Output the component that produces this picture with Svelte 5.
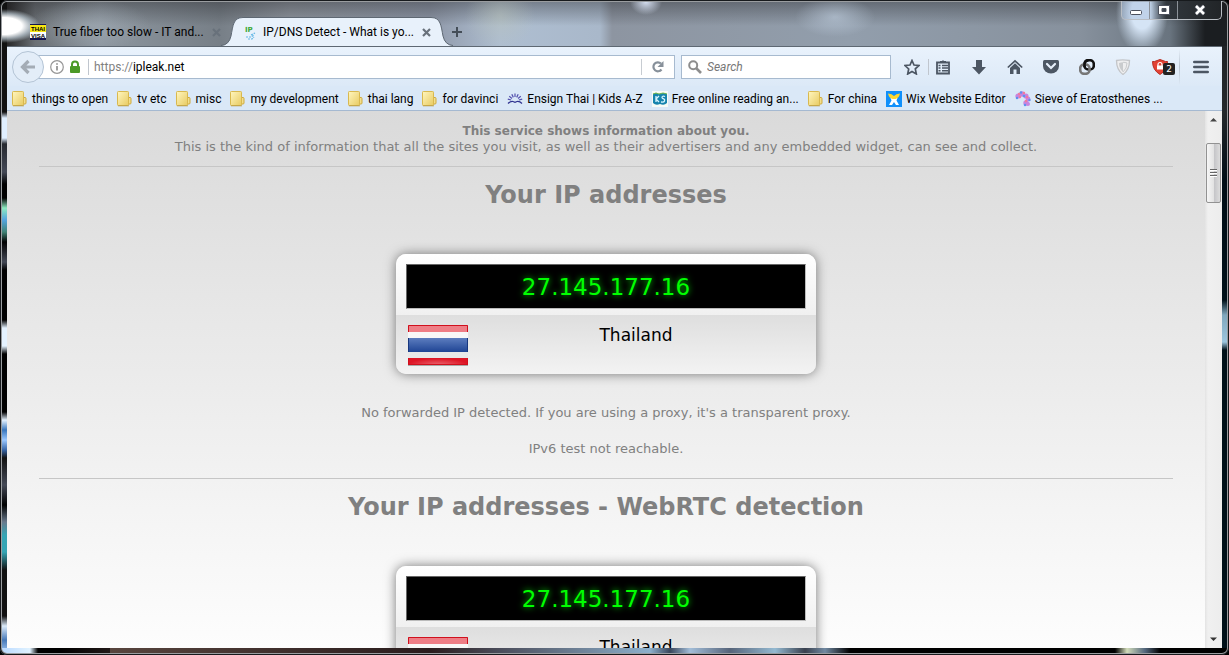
<script>
  const bookmarks = [
    { icon: 'folder', label: 'things to open' },
    { icon: 'folder', label: 'tv etc' },
    { icon: 'folder', label: 'misc' },
    { icon: 'folder', label: 'my development' },
    { icon: 'folder', label: 'thai lang' },
    { icon: 'folder', label: 'for davinci' },
    { icon: 'rays', label: 'Ensign Thai | Kids A-Z' },
    { icon: 'kids', label: 'Free online reading an...' },
    { icon: 'folder', label: 'For china' },
    { icon: 'wix', label: 'Wix Website Editor' },
    { icon: 'sieve', label: 'Sieve of Eratosthenes ...' }
  ];
  const sections = [
    { title: 'Your IP addresses', ip: '27.145.177.16', country: 'Thailand', notes: ["No forwarded IP detected. If you are using a proxy, it's a transparent proxy.", 'IPv6 test not reachable.'] },
    { title: 'Your IP addresses - WebRTC detection', ip: '27.145.177.16', country: 'Thailand', notes: [] }
  ];
  const rays = [-75, -50, -25, 0, 25, 50, 75];
</script>

{#snippet closeMark()}
  <svg width="9" height="9" viewBox="0 0 9 9"><path d="M1 1l7 7M8 1L1 8" stroke="#68717b" stroke-width="2.2" /></svg>
{/snippet}

{#snippet siteIcon(kind)}
  <svg width="16" height="16" viewBox="0 0 16 16">
    {#if kind === 'folder'}
      <defs>
        <linearGradient id="fold" x1="0" y1="0" x2="1" y2="1"><stop offset="0" stop-color="#fff6bf" /><stop offset="1" stop-color="#e8cb62" /></linearGradient>
      </defs>
      <path d="M10 6.500h3q1 0 1 1v4.500q0 1-1 1h-3z" fill="#f2df8d" stroke="#cfa93c" />
      <rect x=".5" y=".5" width="11" height="14" rx=".8" fill="url(#fold)" stroke="#d9b94f" />
      <path d="M1 14.800h11" stroke="#b89a45" stroke-width=".8" />
    {:else if kind === 'rays'}
      {#each rays as angle}
        <path d="M8 6V2.500" stroke="#5350ae" stroke-width="1.200" transform="rotate({angle} 8 10)" />
      {/each}
      <path d="M1 12.500q2.500-2.500 5-2l2 .8 2-.8q2.500-.5 5 2" stroke="#2e318f" fill="none" stroke-width="1.200" />
    {:else if kind === 'kids'}
      <rect width="16" height="16" fill="#f8fbf5" />
      <path d="M1 3q3-2 6 0 4-2 8 0v9q-3 3-7 1-4 2-7-1z" fill="#1784ad" />
      <path d="M1 3q3-2 6 0 4-2 8 0" stroke="#74b94e" fill="none" />
      <path d="M4 5v6M7 5L4 8l3 3M13 5.500q-3-1-3 1 0 1 2 1.500 1 .5.500 2T9 11" stroke="#d8f6ff" stroke-width="1.300" fill="none" />
    {:else if kind === 'wix'}
      <rect width="16" height="16" fill="#1090fb" />
      <path d="M4.500 7h7l-1 2.500 2.500 4.500h-3l-2-3-2 3H3l2.500-4.500z" fill="#fff" />
      <path d="M2 2.500q4 0 6 2.500 2-2.500 6-2.500-1 4.500-4.500 5.500h-3Q3 7 2 2.500z" fill="#ffd82f" />
    {:else}
      <g fill="#c784df">
        <circle cx="3" cy="5" r="2.600" /><circle cx="7" cy="3" r="2.700" /><circle cx="11" cy="5" r="2.600" /><circle cx="13" cy="8" r="2.400" /><circle cx="11" cy="12" r="2.700" /><circle cx="13" cy="13" r="2" />
      </g>
      <g fill="#5d91ef">
        <circle cx="2" cy="7" r="1.200" /><circle cx="6" cy="1.500" r="1.200" /><circle cx="9" cy="5" r="1.300" /><circle cx="14.500" cy="9" r="1.200" /><circle cx="10" cy="14" r="1.200" />
      </g>
      <g fill="#f27a9a">
        <circle cx="4" cy="3" r="1.200" /><circle cx="9" cy="2" r="1.200" /><circle cx="12" cy="6" r="1.200" /><circle cx="11" cy="10" r="1.200" /><circle cx="5" cy="6" r="1.200" />
      </g>
    {/if}
  </svg>
{/snippet}

{#snippet flag()}
  <svg class="flag" width="60" height="41" viewBox="0 0 60 41" role="img" aria-label="Flag of Thailand">
    <defs>
      <linearGradient id="blue" x2="0" y2="1"><stop stop-color="#5c7dbf" /><stop offset="1" stop-color="#1f4494" /></linearGradient>
      <radialGradient id="shine" cx=".5" cy="1" r=".5"><stop stop-color="#fff" stop-opacity=".35" /><stop offset="1" stop-color="#fff" stop-opacity="0" /></radialGradient>
    </defs>
    <rect width="60" height="40" fill="#f8f8f8" />
    <rect width="60" height="7" fill="#ee7e86" />
    <rect y="13" width="60" height="14" fill="url(#blue)" />
    <rect y="27" width="60" height="6" fill="#e8e8e8" />
    <rect y="33" width="60" height="7" fill="#de1525" />
    <rect y="27" width="60" height="13" fill="url(#shine)" />
    <path d="M.5 7V.5h59V7M.5 33v6.500h59V33" fill="none" stroke="#d0101d" />
    <path d="M.5 13v14M59.500 13v14" stroke="#17377f" />
    <path d="M0 40.500h60" stroke="#aaa" />
  </svg>
{/snippet}

<div class="window">
  <header class="titlebar">
    <button class="tab">
      <svg width="16" height="16" viewBox="0 0 16 16">
        <rect width="16" height="16" fill="#15154f" />
        <rect y="1" width="16" height="7" fill="#f8e713" />
        <rect y="8" width="16" height="6" fill="#fff" />
        <text x="8" y="7" class="fav">THAI</text>
        <text x="8" y="13.500" class="fav">VISA</text>
      </svg>
      <span>True fiber too slow - IT and...</span>
      {@render closeMark()}
    </button>
    <div class="active">
      <svg width="22" height="29" viewBox="0 0 22 29">
        <path d="M0 29Q8 28 10 19C12 9 12 .5 22 .5V29z" fill="#e8f1fb" />
        <path d="M0 28.500Q8 28 10 19C12 9 12 .5 22 .5" fill="none" stroke="#5e6873" />
      </svg>
      <button class="tab front">
        <svg width="16" height="16" viewBox="0 0 16 16">
          <text x="2" y="8" class="ip">IP</text>
          <path d="M8 11l4-2M3 13h5l3-2M5 15h4l2-2" stroke="#62b7e6" stroke-width="1.200" stroke-dasharray="2 1" fill="none" />
        </svg>
        <span>IP/DNS Detect - What is yo...</span>
        {@render closeMark()}
      </button>
      <svg width="22" height="29" viewBox="0 0 22 29">
        <path d="M22 29Q14 28 12 19C10 9 10 .5 0 .5V29z" fill="#e8f1fb" />
        <path d="M22 28.500Q14 28 12 19C10 9 10 .5 0 .5" fill="none" stroke="#5e6873" />
      </svg>
    </div>
    <button class="plus" aria-label="Open a new tab">
      <svg width="12" height="12" viewBox="0 0 12 12"><path d="M6 1v10M1 6h10" stroke="#444d57" stroke-width="2" /></svg>
    </button>
    <div class="caption">
      <button aria-label="Minimize"><svg width="14" height="12" viewBox="0 0 14 12"><rect x="1.500" y="6.500" width="11" height="4" rx="1" fill="#fff" stroke="#4b505c" /></svg></button>
      <button aria-label="Maximize"><svg width="14" height="12" viewBox="0 0 14 12"><path fill-rule="evenodd" d="M1.500 1.500h11v9h-11zM5 4.500v3h4v-3z" fill="#fff" stroke="#4b505c" /></svg></button>
      <button class="wide" aria-label="Close"><svg width="14" height="12" viewBox="0 0 14 12"><path d="M3 2l8 8M11 2l-8 8" stroke="#4b505c" stroke-width="4" /><path d="M3 2l8 8M11 2l-8 8" stroke="#fff" stroke-width="2.600" /></svg></button>
    </div>
  </header>

  <div class="client">
    <nav class="toolbar">
      <button class="back" aria-label="Back">
        <svg width="16" height="16" viewBox="0 0 16 16"><path d="M8.500 2L2.500 8l6 6M3 8h12" fill="none" stroke="#a4acb5" stroke-width="3.200" /></svg>
      </button>
      <div class="url">
        <svg width="14" height="14" viewBox="0 0 14 14"><circle cx="7" cy="7" r="6.300" fill="none" stroke="#969696" stroke-width="1.200" /><path d="M7 6v4.500M7 3.200v1.600" stroke="#888" stroke-width="1.600" /></svg>
        <svg width="12" height="14" viewBox="0 0 12 14"><path d="M3 7V4.500a3 3 0 0 1 6 0V7" fill="none" stroke="#4c9a27" stroke-width="2" /><rect x="1" y="6" width="10" height="7" rx="1" fill="#4c9a27" /></svg>
        <span class="rule"></span>
        <label for="address">https://</label>
        <input id="address" value="ipleak.net" />
        <button class="reload" aria-label="Reload">
          <svg width="14" height="14" viewBox="0 0 14 14"><path d="M10.500 9.500A4.500 4.500 0 1 1 10 3.500" fill="none" stroke="#87909a" stroke-width="2.200" /><path d="M12.500 1v6h-6z" fill="#87909a" /></svg>
        </button>
      </div>
      <div class="search">
        <svg width="14" height="14" viewBox="0 0 14 14"><circle cx="5.200" cy="5.200" r="4" fill="none" stroke="#8d8d8d" stroke-width="2" /><path d="M8 8l5 5" stroke="#8d8d8d" stroke-width="2.600" /></svg>
        <input aria-label="Search" placeholder="Search" />
      </div>
      <div class="marks">
        <button aria-label="Bookmark this page"><svg width="16" height="16" viewBox="0 0 16 16"><path d="M8 1.500l2 4.500 5 .5-3.700 3.400 1 5L8 12.400 3.700 15l1-5L1 6.500 6 6z" fill="none" stroke="#4c5663" stroke-width="1.700" /></svg></button>
        <span class="rule"></span>
        <button aria-label="Show bookmarks"><svg width="16" height="16" viewBox="0 0 16 16"><path d="M2 3.500h12v11H2z" fill="none" stroke="#4c5663" stroke-width="1.800" /><path d="M5 4V2h2a1.200 1.200 0 0 1 2 0h2v2z" fill="#4c5663" /><path d="M3.500 6.500h2m1.500 0h6M3.500 9h2M7 9h6M3.500 11.800h2m1.500 0h6" stroke="#4c5663" stroke-width="1.400" /></svg></button>
      </div>
      <div class="tools">
        <button aria-label="Downloads"><svg width="16" height="16" viewBox="0 0 16 16"><path d="M5 1h6v7h4l-7 7.500L1 8h4z" fill="#4c5663" /></svg></button>
        <button aria-label="Home"><svg width="16" height="16" viewBox="0 0 16 16"><path d="M.8 8.500L8 1.800l7.200 6.700" fill="none" stroke="#4c5663" stroke-width="1.700" /><path d="M3 9l5-4.700L13 9v6H9.500v-4.500h-3V15H3z" fill="#4c5663" /></svg></button>
        <button aria-label="Pocket"><svg width="16" height="16" viewBox="0 0 16 16"><path d="M1.500 1h13q1.500 0 1.500 1.500V7a8 7.500 0 0 1-16 0V2.500Q0 1 1.500 1z" fill="#4c5663" /><path d="M4 5l4 4 4-4" fill="none" stroke="#e6effa" stroke-width="2.200" stroke-linecap="round" /></svg></button>
        <button aria-label="Linked sessions"><svg width="16" height="16" viewBox="0 0 16 16"><rect x="5.500" y="1.200" width="9.300" height="9.300" rx="3.800" fill="none" stroke="#111" stroke-width="2.600" /><rect x="1.200" y="5.500" width="9.300" height="9.300" rx="3.800" fill="none" stroke="#777" stroke-width="2.600" /><path d="M5.500 8V5q.3-3.500 4-3.800" fill="none" stroke="#111" stroke-width="2.600" /></svg></button>
        <button aria-label="Shield"><svg width="16" height="16" viewBox="0 0 16 16"><path d="M1.500 1.500q6-1.200 13 0Q14.500 11 8 15.500 1.500 11 1.500 1.500z" fill="#eeeeef" stroke="#c3c5c8" stroke-width="1.300" /><path d="M4 4q2-.7 4-.7V13Q4 9.500 4 4z" fill="#c9cbcd" /><path d="M8 3.300q2 0 4 .7Q12 9.500 8 13" fill="none" stroke="#c9cbcd" /></svg></button>
      </div>
      <button class="guard" aria-label="Blocked trackers, 2">
        <svg width="16" height="16" viewBox="0 0 16 16"><path d="M8 .5l5.500 2h2Q15.500 11 8 15.500.5 11 .5 2.500h2z" fill="#e34234" stroke="#b72f25" /><path d="M6 7V5.500a2 2 0 0 1 4 0V7" fill="none" stroke="#fff" stroke-width="1.200" /><rect x="5" y="6.500" width="6" height="4" fill="#fff" /></svg>
        <span class="badge">2</span>
      </button>
      <span class="tall"></span>
      <button class="menu" aria-label="Open menu"><svg width="16" height="14" viewBox="0 0 16 14"><path d="M1.300 2h13.400M1.300 7h13.400M1.300 12h13.400" stroke="#4c5663" stroke-width="2.600" stroke-linecap="round" /></svg></button>
    </nav>

    <nav class="bookmarks" aria-label="Bookmarks">
      {#each bookmarks as item}
        <a href="#top">{@render siteIcon(item.icon)}<span>{item.label}</span></a>
      {/each}
    </nav>

    <div class="viewport">
      <main id="top">
        <p class="intro"><strong>This service shows information about you.</strong><br />This is the kind of information that all the sites you visit, as well as their advertisers and any embedded widget, can see and collect.</p>
        {#each sections as section}
          <section>
            <h1>{section.title}</h1>
            <div class="card">
              <div class="top"><div class="address">{section.ip}</div></div>
              <div class="place">{@render flag()}<span>{section.country}</span></div>
            </div>
            {#each section.notes as note}<p>{note}</p>{/each}
          </section>
        {/each}
      </main>
      <div class="scrollbar" aria-hidden="true">
        <svg width="9" height="5" viewBox="0 0 9 5"><path d="M1 4.500h7L4.500 1z" fill="#444" /></svg>
        <span class="thumb"><i></i><i></i><i></i></span>
        <svg class="down" width="9" height="5" viewBox="0 0 9 5"><path d="M1 .5h7L4.500 4z" fill="#333" /></svg>
      </div>
    </div>
  </div>
</div>

<style>
  :global(body) { margin: 0; background: #000; }
  * { box-sizing: border-box; }
  button, input { font: inherit; color: inherit; border: 0; padding: 0; background: none; outline: 0; }
  button { display: flex; align-items: center; justify-content: center; }
  svg { display: block; flex: none; }

  .window {
    height: 100vh;
    display: flex;
    flex-direction: column;
    padding: 1px 7px 7px;
    border-radius: 7px;
    box-shadow: inset 0 0 0 1px #171a1d, inset 0 0 0 2px #9a9da0;
    font: 12px/16px Roboto, "Open Sans", sans-serif;
    color: #000;
    background:
      radial-gradient(ellipse 36px 17px at 4px 26px, #fff 50%, #d4e4ef99 75%, transparent) no-repeat,
      linear-gradient(90deg, #b7d8ff, #e0f2ff 30px, #000 38px 60px, #211918 110px, #58453e 80px, #2a1c1d 430px, #4b4d5b 500px, #8db0cc 650px, #39465b 670px, #a2bdd8 690px, #56647a 730px, #94b9d1 775px, #39404e 805px, #7189a1 825px, #000 850px, #000 1115px, #d2dcba 1127px, #53677d 1145px, #000 1160px) 0 100% / 100% 7px no-repeat,
      linear-gradient(#111 0 112px, #e0efff 118px 138px, #26292f 144px, #444956 172px, #000 184px 198px, #8debc0 208px, #54a4df 220px, #408375 232px, #000 242px, #444956 262px, #000 270px 320px, #e4f2ff 328px 346px, #000 354px 412px, #e4f2ff 420px, #3876bd 430px, #9bc8ff 440px, #3765a6 450px, #111 458px, #444956 485px, #000 505px, #68798c 522px, #35a5b4 535px 552px, #111 570px 616px, #dcebfa 626px, #4779b8 640px, #b7d8ff) 0 0 / 7px 100% no-repeat,
      linear-gradient(#202326, #24282b 64px, #000d16 134px, #001019 254px, #80a7bd 269px, #9dc6df 296px, #001019 304px, #001019) 100% 46px / 7px 100% no-repeat,
      radial-gradient(ellipse 60px 26px at 90px 25px, #aab5be77, transparent) no-repeat,
      radial-gradient(ellipse 35px 34px at 500px 16px, #bac2b577, transparent) no-repeat,
      radial-gradient(ellipse 16px 13px at 646px 2px, #d4def0, transparent) no-repeat,
      radial-gradient(ellipse 40px 20px at 835px 17px, #c2d1e299, transparent) no-repeat,
      radial-gradient(ellipse 26px 42px at 1142px 12px, #d5e4f5 40%, #b5c4d499 75%, transparent) no-repeat,
      linear-gradient(#1b1b1e66, transparent 26px) 0 0 / 100% 46px no-repeat,
      linear-gradient(90deg, #171515, #6b7075 35px, #8d969f 100px, #777f87 220px, #9299a2 290px, #8f98a8 430px, #aebed1 500px, #a9b8ca 600px, #8d95a1 612px, #929eac 850px, #87919d 1080px, #69747f 1170px, #1b1e21 1205px);
  }
  .titlebar { display: flex; align-items: flex-end; height: 45px; flex: none; }
  .tab { gap: 8px; height: 28px; padding-left: 23px; white-space: nowrap; }
  .tab span { min-width: 151px; text-align: left; }
  .tab svg:first-child { margin-right: -1px; }
  .fav { font: bold 6px "Liberation Sans", sans-serif; text-anchor: middle; }
  .ip { font: bold 7px "DejaVu Sans", sans-serif; fill: #3da938; }
  .active { display: flex; }
  .front { padding: 0; height: 29px; background: #e8f1fb; border-top: 1px solid #5e6873; }
  .front svg:first-child { margin-right: -4px; }
  .plus { width: 24px; height: 28px; margin-left: -8px; }
  .caption { display: flex; align-self: flex-start; margin-left: auto; border: 1px solid #b9bec4; border-top: 0; border-radius: 0 0 5px 5px; height: 19px; background: linear-gradient(90deg, #a3bad766 28%, #31373d 45%, #222528); }
  .caption button { width: 28px; border-right: 1px solid #8c9299; }
  .caption .wide { width: 43px; border: 0; }

  .client { flex: 1; min-height: 0; display: flex; flex-direction: column; background: #fff; }
  .toolbar { display: flex; align-items: center; flex: none; height: 40px; padding: 0 13px 0 5px; border-top: 1px solid #5e6873; background: linear-gradient(#e9f2fc, #dce9f7); }
  .back { width: 32px; height: 32px; border-radius: 50%; border: 1px solid #b4c4d5; background: #e3edf8; z-index: 1; flex: none; }
  .url { flex: 1; min-width: 0; display: flex; align-items: center; height: 24px; margin-left: -10px; padding-left: 15px; background: #fff; border: 1px solid #a7bacf; }
  .url svg + svg { margin-left: 5px; }
  .url label { color: #7f7f7f; }
  .url input { flex: 1; min-width: 0; height: 20px; }
  .rule { width: 1px; height: 16px; background: #c0c6ce; margin: 0 5px 0 7px; flex: none; }
  .marks .rule { margin: 0 6px 0 8px; }
  .reload { width: 33px; height: 16px; border-left: 1px solid #c7ccd2; }
  .search { width: 210px; height: 24px; display: flex; align-items: center; gap: 5px; margin-left: 6px; padding-left: 6px; background: #fff; border: 1px solid #a7bacf; }
  .search input { flex: 1; min-width: 0; }
  .search input::placeholder { color: #777; font-style: italic; opacity: 1; }
  .marks { display: flex; align-items: center; margin-left: 13px; }
  .tools { display: flex; gap: 20px; margin: 0 21px 0 20px; }
  .guard { position: relative; width: 24px; justify-content: flex-start; }
  .badge { position: absolute; left: 11px; top: 4px; width: 12px; height: 12px; border-radius: 2px; background: #222; color: #fff; font: 9px/12px "DejaVu Sans", sans-serif; }
  .tall { width: 1px; height: 36px; margin: 0 13px 0 3px; background: linear-gradient(transparent, #b8c2cd, transparent); }

  .bookmarks { flex: none; display: flex; align-items: center; gap: 9px; height: 25px; padding: 1px 5px 0; background: #dae8f7; border-bottom: 1px solid #a5b9d1; white-space: nowrap; overflow: hidden; }
  .bookmarks a { display: flex; align-items: center; gap: 4px; color: #000; text-decoration: none; }

  .viewport { flex: 1; min-height: 0; display: flex; }
  main { flex: 1; min-width: 0; overflow: hidden; padding: 12px 32px 0; background: linear-gradient(#dadada, #fdfdfd); color: #808080; font: 13px/16px "DejaVu Sans", sans-serif; text-align: center; }
  p { margin: 0; }
  .intro { margin-bottom: 11px; }
  strong { font-size: 12px; }
  section { border-top: 1px solid #c6c6c6; padding: 12px 0 21px; }
  h1 { margin: 0 0 43px; font-size: 24px; line-height: 32px; }
  .card { width: 420px; height: 120px; margin: 0 auto 31px; border-radius: 10px; overflow: hidden; box-shadow: 0 0 12px #777; background: #eee; color: #000; }
  .top { height: 61px; padding: 10px; background: linear-gradient(#fff, #f0f0f0); }
  .address { height: 45px; border: 1px solid #666; border-bottom-color: #bbb; border-right-color: #bbb; background: #000; color: #0f0; font-size: 23px; line-height: 45px; text-shadow: 0 0 6px #0c0; }
  .place { display: flex; height: 59px; padding: 10px 12px; background: linear-gradient(#dedede, #f3f3f3); }
  .place span { flex: 1; font-size: 17px; line-height: 20px; }
  section p + p { margin-top: 20px; }

  .scrollbar { width: 17px; flex: none; display: flex; flex-direction: column; align-items: center; padding: 6px 0; background: linear-gradient(90deg, #e3e3e3, #f0f0f0 3px, #ededed); }
  .thumb { width: 15px; height: 60px; margin-top: 21px; display: flex; flex-direction: column; justify-content: center; align-items: center; gap: 1px; border: 1px solid #929292; border-radius: 2px; background: linear-gradient(90deg, #f6f6f6, #e3e3e3 50%, #c5c5c8 55%, #dcdcdc); }
  .thumb i { width: 7px; height: 2px; background: #666; border-bottom: 1px solid #fff; }
  .down { margin-top: auto; }
</style>
